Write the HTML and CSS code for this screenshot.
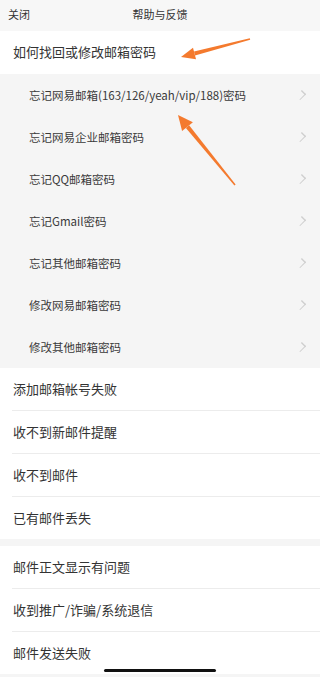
FILE: index.html
```html
<!DOCTYPE html>
<html lang="zh-CN">
<head>
    <meta charset="UTF-8">
    <meta name="viewport" content="width=device-width, initial-scale=1.0">
    <link rel="stylesheet" href="styles.css">
</head>
<body>
    <!-- Top bar -->
    <div class="top-bar">
        <span class="close">关闭</span>
        <span class="title">帮助与反馈</span>
    </div>

    <!-- Password section -->
    <div class="row row-main">如何找回或修改邮箱密码</div>
    <ul class="sub-list">
        <li>忘记网易邮箱(163/126/yeah/vip/188)密码<span class="chevron"></span></li>
        <li>忘记网易企业邮箱密码<span class="chevron"></span></li>
        <li>忘记QQ邮箱密码<span class="chevron"></span></li>
        <li>忘记Gmail密码<span class="chevron"></span></li>
        <li>忘记其他邮箱密码<span class="chevron"></span></li>
        <li>修改网易邮箱密码<span class="chevron"></span></li>
        <li>修改其他邮箱密码<span class="chevron"></span></li>
    </ul>

    <ul class="group">
        <li>添加邮箱帐号失败</li>
        <li>收不到新邮件提醒</li>
        <li>收不到邮件</li>
        <li>已有邮件丢失</li>
    </ul>

    <ul class="group">
        <li>邮件正文显示有问题</li>
        <li>收到推广/诈骗/系统退信</li>
        <li>邮件发送失败</li>
    </ul>

    <!-- Annotation arrows -->
    <svg class="arrows" width="320" height="677" viewBox="0 0 320 677">
        <polygon fill="#f47a2e" points="250.2,39.8 249.8,38.2 194,51.6 195,55.4"/>
        <polygon fill="#f47a2e" points="181,57 193,47.7 196,59.3"/>
        <polygon fill="#f47a2e" points="235.6,184.5 234.4,185.5 185.9,127.9 189.1,125.3"/>
        <polygon fill="#f47a2e" points="178,115 192.9,122.2 182.1,131"/>
    </svg>

    <div class="home-bar"></div>
</body>
</html>
```

FILE: styles.css
```css
body {
    font-family: "Noto Sans CJK SC", "Noto Sans", sans-serif;
    margin: 0;
    padding: 0;
    background-color: #f5f5f5;
    color: #333;
    position: relative;
    height: 677px;
    overflow: hidden;
}

ul {
    list-style: none;
    margin: 0;
    padding: 0;
}

/* Top bar */
.top-bar {
    height: 31px;
    position: relative;
    background-color: #f7f7f7;
    font-size: 11px;
    line-height: 28px;
    color: #333;
}

.top-bar .close {
    padding-left: 8px;
}

.top-bar .title {
    position: absolute;
    left: 0;
    right: 0;
    top: 0;
    text-align: center;
    pointer-events: none;
}

/* Rows */
.row-main {
    background-color: #fff;
    height: 43px;
    line-height: 42px;
    padding-left: 13px;
    font-size: 13px;
}

.sub-list li {
    height: 42px;
    display: flex;
    align-items: center;
    justify-content: space-between;
    padding: 0 14px 0 29px;
    font-size: 11.5px;
    color: #3a3a3a;
}

.chevron {
    width: 5px;
    height: 5px;
    border-top: 1px solid #cfcfcf;
    border-right: 1px solid #cfcfcf;
    transform: rotate(45deg) scaleY(1.4);
    margin-right: 2px;
}

.group {
    background-color: #fff;
    padding-left: 12px;
    margin-bottom: 7px;
}

.group li {
    height: 42px;
    line-height: 42px;
    padding-left: 1px;
    font-size: 13px;
    border-bottom: 1px solid #ececec;
}

.group li:last-child {
    border-bottom: none;
}

/* Overlays */
.arrows {
    position: absolute;
    top: 0;
    left: 0;
    pointer-events: none;
}

.home-bar {
    position: absolute;
    left: 104px;
    bottom: 5px;
    width: 112px;
    height: 3px;
    border-radius: 2px;
    background-color: #111;
}
```
